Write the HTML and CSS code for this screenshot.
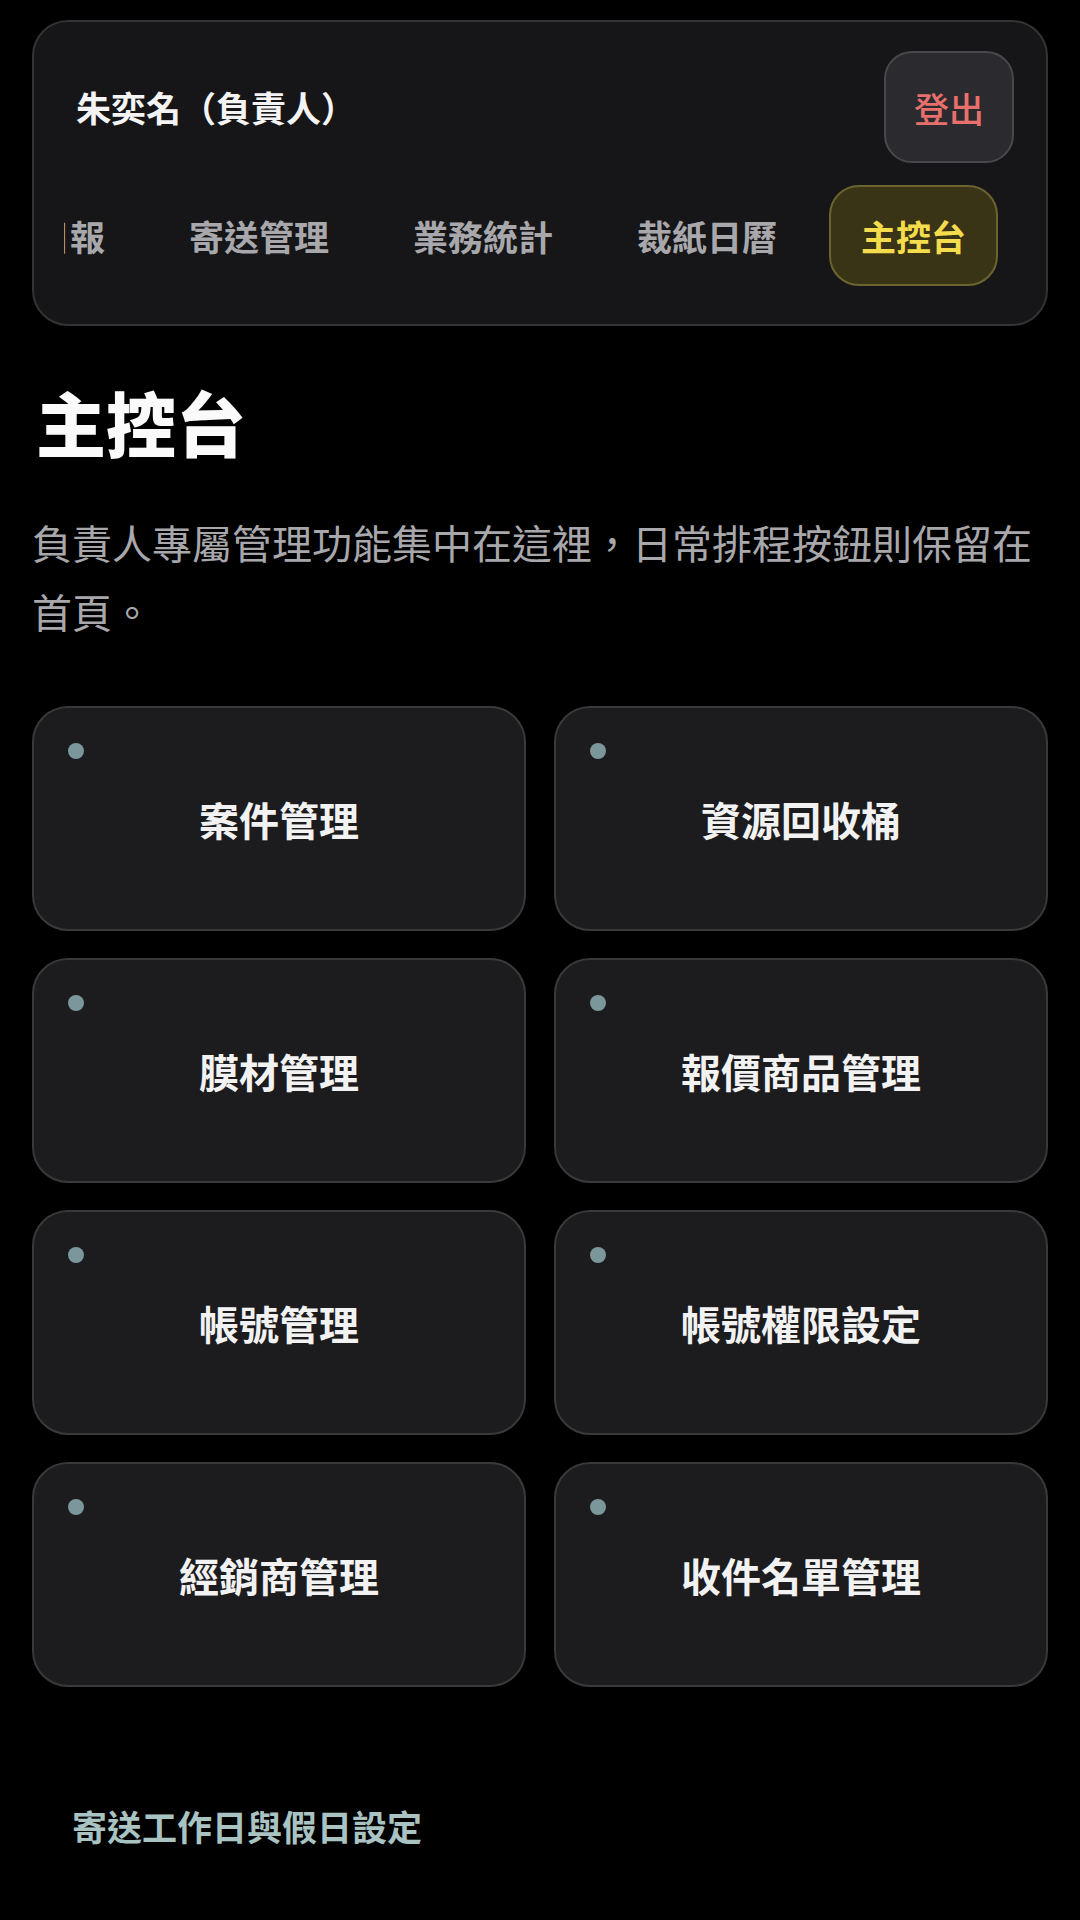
FILE: index.html
```html
<!DOCTYPE html>
<html lang="zh-Hant">
<head>
<meta charset="utf-8">
<title>主控台</title>
<link rel="stylesheet" href="styles.css">
</head>
<body>
<div class="page">
  <header class="topcard">
    <div class="topbar">
      <div class="user">朱奕名（負責人）</div>
      <button class="logout">登出</button>
    </div>
    <nav class="tabs">
      <div class="track">
        <span class="tab">日報</span>
        <span class="tab">寄送管理</span>
        <span class="tab">業務統計</span>
        <span class="tab">裁紙日曆</span>
        <span class="tab active">主控台</span>
      </div>
    </nav>
  </header>

  <h1 class="title">主控台</h1>
  <p class="desc">負責人專屬管理功能集中在這裡，日常排程按鈕則保留在首頁。</p>

  <section class="grid">
    <div class="tile"><span class="dot"></span><span class="label">案件管理</span></div>
    <div class="tile"><span class="dot"></span><span class="label">資源回收桶</span></div>
    <div class="tile"><span class="dot"></span><span class="label">膜材管理</span></div>
    <div class="tile"><span class="dot"></span><span class="label">報價商品管理</span></div>
    <div class="tile"><span class="dot"></span><span class="label">帳號管理</span></div>
    <div class="tile"><span class="dot"></span><span class="label">帳號權限設定</span></div>
    <div class="tile"><span class="dot"></span><span class="label">經銷商管理</span></div>
    <div class="tile"><span class="dot"></span><span class="label">收件名單管理</span></div>
  </section>

  <a class="link">寄送工作日與假日設定</a>
</div>
</body>
</html>
```

FILE: styles.css
```css
html, body {
  margin: 0;
  padding: 0;
  background: #000;
}
body {
  font-family: "Noto Sans CJK TC", "Noto Sans CJK SC", "Noto Sans", sans-serif;
  color: #f2f2f2;
}
.page {
  padding: 20px 32px 0 32px;
  box-sizing: border-box;
  width: 1080px;
  min-height: 1920px;
}
.topcard {
  background: #161618;
  border: 2px solid #333336;
  border-radius: 36px;
  padding: 29px 30px 38px 30px;
  box-sizing: border-box;
  height: 306px;
}
.topbar {
  display: flex;
  align-items: center;
  justify-content: space-between;
  height: 112px;
  padding: 0 2px 0 12px;
}
.user {
  font-size: 35px;
  font-weight: 700;
  color: #f4f4f4;
  line-height: 1.2;
}
.logout {
  width: 130px;
  height: 112px;
  border-radius: 28px;
  background: #2b2b2f;
  border: 2px solid #48484c;
  color: #e8706c;
  font-family: inherit;
  font-size: 35px;
  font-weight: 500;
  padding: 0;
}
.tabs {
  margin-top: 22px;
  overflow: hidden;
  height: 102px;
}
.track {
  display: flex;
  gap: 20px;
  margin-left: -61px;
  white-space: nowrap;
}
.tab {
  flex: none;
  height: 101px;
  box-sizing: border-box;
  display: flex;
  align-items: center;
  padding: 0 30px;
  font-size: 35px;
  font-weight: 700;
  color: #a8a8ac;
  border-radius: 30px;
  border: 2px solid transparent;
}
.tab.active {
  background: #393416;
  border-color: #6c6430;
  color: #f4dc4c;
}
.title {
  margin: 54px 0 0 4px;
  font-size: 70px;
  font-weight: 800;
  line-height: 84px;
  color: #fafafa;
}
.desc {
  margin: 44px 0 0 0;
  font-size: 40px;
  line-height: 69px;
  font-weight: 400;
  color: #a8a8ac;
}
.grid {
  margin-top: 60px;
  display: grid;
  grid-template-columns: 1fr 1fr;
  column-gap: 28px;
  row-gap: 27px;
}
.tile {
  position: relative;
  height: 225px;
  box-sizing: border-box;
  background: #1c1c1f;
  border: 2px solid #39393c;
  border-radius: 36px;
  display: flex;
  align-items: center;
  justify-content: center;
}
.dot {
  position: absolute;
  left: 34px;
  top: 35px;
  width: 16px;
  height: 16px;
  border-radius: 50%;
  background: #7c979b;
}
.label {
  font-size: 40px;
  font-weight: 700;
  color: #f2f2f2;
  line-height: 1.2;
}
.link {
  display: block;
  margin: 114px 0 0 40px;
  font-size: 35px;
  font-weight: 700;
  line-height: 50px;
  color: #a9c2c2;
}
```
